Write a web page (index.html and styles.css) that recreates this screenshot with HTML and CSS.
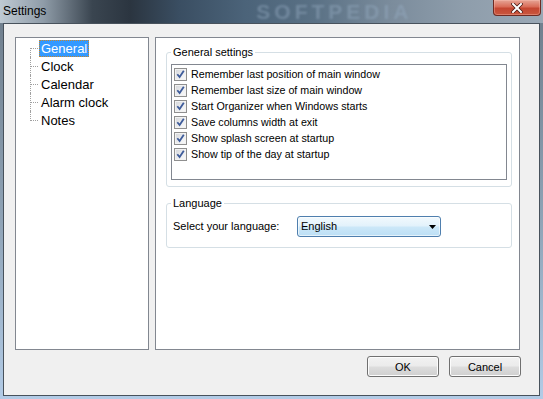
FILE: index.html
```html
<!DOCTYPE html>
<html lang="en">
<head>
  <meta charset="UTF-8">
  <title>Settings</title>
  <link rel="stylesheet" href="styles.css">
</head>
<body>
  <div class="window">
    <div class="titlebar">
      <span class="title">Settings</span>
      <span class="watermark">SOFTPEDIA</span>
      <button class="close-btn" aria-label="Close">
        <svg width="12" height="10" viewBox="0 0 12 10">
          <path d="M2 1 L10 9 M10 1 L2 9" stroke="#4a1a14" stroke-width="3.6" stroke-linecap="square"/>
          <path d="M2 1 L10 9 M10 1 L2 9" stroke="#fff" stroke-width="2" stroke-linecap="square"/>
        </svg>
      </button>
    </div>
    <div class="client">
      <div class="panes">
        <ul class="tree">
          <li class="tree-item"><span class="tree-label selected">General</span></li>
          <li class="tree-item"><span class="tree-label">Clock</span></li>
          <li class="tree-item"><span class="tree-label">Calendar</span></li>
          <li class="tree-item"><span class="tree-label">Alarm clock</span></li>
          <li class="tree-item"><span class="tree-label">Notes</span></li>
        </ul>
        <div class="content">
          <fieldset class="group">
            <legend>General settings</legend>
            <div class="check-list">
              <label class="check-row"><span class="checkbox"><svg width="11" height="11" viewBox="0 0 11 11"><path d="M2.3 5.2 L4.6 8 L8.8 1.8" fill="none" stroke="#3d5b9a" stroke-width="1.8"/></svg></span>Remember last position of main window</label>
              <label class="check-row"><span class="checkbox"><svg width="11" height="11" viewBox="0 0 11 11"><path d="M2.3 5.2 L4.6 8 L8.8 1.8" fill="none" stroke="#3d5b9a" stroke-width="1.8"/></svg></span>Remember last size of main window</label>
              <label class="check-row"><span class="checkbox"><svg width="11" height="11" viewBox="0 0 11 11"><path d="M2.3 5.2 L4.6 8 L8.8 1.8" fill="none" stroke="#3d5b9a" stroke-width="1.8"/></svg></span>Start Organizer when Windows starts</label>
              <label class="check-row"><span class="checkbox"><svg width="11" height="11" viewBox="0 0 11 11"><path d="M2.3 5.2 L4.6 8 L8.8 1.8" fill="none" stroke="#3d5b9a" stroke-width="1.8"/></svg></span>Save columns width at exit</label>
              <label class="check-row"><span class="checkbox"><svg width="11" height="11" viewBox="0 0 11 11"><path d="M2.3 5.2 L4.6 8 L8.8 1.8" fill="none" stroke="#3d5b9a" stroke-width="1.8"/></svg></span>Show splash screen at startup</label>
              <label class="check-row"><span class="checkbox"><svg width="11" height="11" viewBox="0 0 11 11"><path d="M2.3 5.2 L4.6 8 L8.8 1.8" fill="none" stroke="#3d5b9a" stroke-width="1.8"/></svg></span>Show tip of the day at startup</label>
            </div>
          </fieldset>
          <fieldset class="group lang-group">
            <legend>Language</legend>
            <div class="lang-row">
              <span class="lang-label">Select your language:</span>
              <div class="combo">
                <span>English</span>
                <svg width="7" height="4" viewBox="0 0 7 4"><path d="M0 0 H7 L3.5 4 Z" fill="#000"/></svg>
              </div>
            </div>
          </fieldset>
        </div>
      </div>
      <div class="buttons">
        <button class="btn">OK</button>
        <button class="btn">Cancel</button>
      </div>
    </div>
  </div>
</body>
</html>
```

FILE: styles.css
```css
body {
  margin: 0;
  background: #fff;
  font-family: 'Liberation Sans', Arial, sans-serif;
  color: #000;
}
.window {
  width: 543px;
  height: 399px;
  display: flex;
  flex-direction: column;
  background: linear-gradient(180deg, #6d7c8a 0%, #8fa3b6 55%, #b2cbe6 100%);
  overflow: hidden;
}
.titlebar {
  height: 23px;
  flex: none;
  display: flex;
  align-items: flex-start;
  background: linear-gradient(90deg, #bfcad3 0%, #8f9ca8 8%, #3a4550 17%, #2b3540 24%, #3a4e62 33%, #4b6379 45%, #5a7185 58%, #7b8c9c 72%, #8e9dab 85%, #9aa8b5 100%);
  overflow: hidden;
}
.title {
  font-size: 12px;
  line-height: 18px;
  padding: 2px 0 0 3px;
  color: #000;
}
.watermark {
  margin-left: 210px;
  font-size: 21px;
  line-height: 23px;
  font-weight: 700;
  letter-spacing: 4px;
  color: rgba(150, 172, 195, 0.45);
  filter: blur(1.3px);
}
.close-btn {
  margin-left: auto;
  margin-right: 2px;
  width: 48px;
  height: 16px;
  padding: 0;
  border: 1px solid #6e2a22;
  border-top: none;
  border-radius: 0 0 4px 4px;
  background: linear-gradient(180deg, #e6a596 0%, #d96c58 45%, #c44631 55%, #c9573e 100%);
  box-shadow: inset 0 0 0 1px rgba(255, 200, 190, 0.35);
  display: flex;
  align-items: center;
  justify-content: center;
}
.client {
  flex: 1;
  margin: 0 3px 3px;
  border: 1px solid #48525c;
  background: #f0f0f0;
  padding: 13px 18px 0 11px;
  display: flex;
  flex-direction: column;
}
.panes {
  display: flex;
  gap: 6px;
  height: 313px;
}
.tree {
  width: 134px;
  box-sizing: border-box;
  margin: 0;
  padding: 1px 0 0;
  list-style: none;
  background: #fff;
  border: 1px solid #828790;
}
.tree-item {
  position: relative;
  height: 18px;
  padding-left: 23px;
}
.tree-item::before {
  content: '';
  position: absolute;
  left: 14px;
  top: 9px;
  width: 8px;
  border-top: 1px dotted #a0a0a0;
}
.tree-item::after {
  content: '';
  position: absolute;
  left: 14px;
  top: 0;
  bottom: 0;
  border-left: 1px dotted #a0a0a0;
}
.tree-item:first-child::after { top: 9px; }
.tree-item:last-child::after { bottom: auto; height: 10px; }
.tree-label {
  display: inline-block;
  font-size: 13px;
  line-height: 15px;
  padding: 0 1px;
  border: 1px solid transparent;
}
.tree-label.selected {
  background: #3399ff;
  color: #fff;
  border: 1px dotted #c8862a;
}
.content {
  width: 365px;
  box-sizing: border-box;
  background: #fff;
  border: 1px solid #828790;
  padding: 8px 7px 0 10px;
}
.group {
  margin: 0;
  padding: 5px 4px 6px;
  border: 1px solid #d5dfe5;
  border-radius: 3px;
  font-size: 11px;
  line-height: 13px;
}
.group legend {
  padding: 0 2px;
}
.check-list {
  height: 116px;
  box-sizing: border-box;
  border: 1px solid #828790;
  padding: 1px 0 0 2px;
  font-size: 10.7px;
}
.check-row {
  display: flex;
  align-items: center;
  height: 16px;
}
.checkbox {
  width: 13px;
  height: 13px;
  box-sizing: border-box;
  margin-right: 4px;
  border: 1px solid #8f8f8f;
  background: linear-gradient(135deg, #d2d4d8 0%, #eeeff1 60%, #fafafa 100%);
  box-shadow: inset 0 0 0 1px #f2f2f2;
  display: flex;
  align-items: center;
  justify-content: center;
}
.lang-group {
  margin-top: 10px;
  padding: 6px 4px 10px;
}
.lang-row {
  display: flex;
  align-items: center;
  padding-left: 2px;
}
.lang-label {
  width: 124px;
}
.combo {
  width: 144px;
  height: 21px;
  box-sizing: border-box;
  border: 1px solid #4f7fae;
  border-radius: 3px;
  background: linear-gradient(180deg, #f2f9fd 0%, #e3f2fb 45%, #cbe7f8 55%, #bcdff5 100%);
  box-shadow: inset 0 0 0 1px rgba(255, 255, 255, 0.6);
  padding: 0 4px 0 3px;
  display: flex;
  align-items: center;
  justify-content: space-between;
}
.buttons {
  display: flex;
  justify-content: flex-end;
  gap: 10px;
  margin-top: 6px;
}
.btn {
  width: 72px;
  height: 21px;
  padding: 0;
  border: 1px solid #707070;
  border-radius: 3px;
  background: linear-gradient(180deg, #f2f2f2 0%, #ebebeb 48%, #dddddd 52%, #cfcfcf 100%);
  box-shadow: inset 0 0 0 1px #fcfcfc;
  font-family: 'Liberation Sans', Arial, sans-serif;
  font-size: 11px;
  color: #000;
}
```
